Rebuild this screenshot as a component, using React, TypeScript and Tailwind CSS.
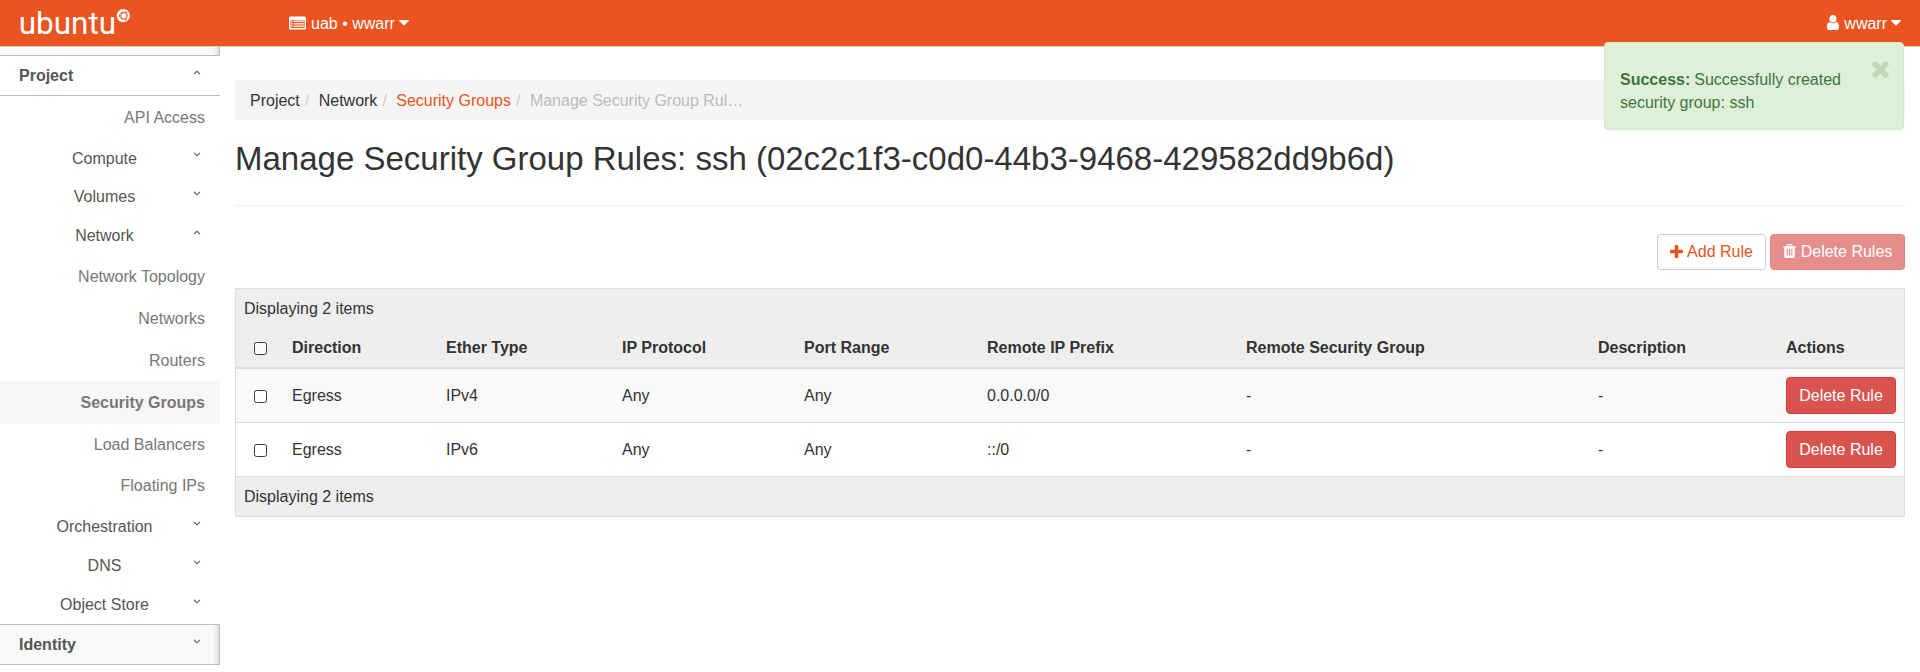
import React from "react";

const leaf = "flex items-center justify-end pr-[15px] text-[#777777]";

type NavItem = { label: string; kind: "leaf" | "group"; open?: boolean; active?: boolean; size: string };

const nav: NavItem[] = [
  { label: "API Access", kind: "leaf", size: "h-[43px] pb-px" },
  { label: "Compute", kind: "group", size: "h-[38px]" },
  { label: "Volumes", kind: "group", size: "h-[39px]" },
  { label: "Network", kind: "group", open: true, size: "h-[39px]" },
  { label: "Network Topology", kind: "leaf", size: "h-[42px]" },
  { label: "Networks", kind: "leaf", size: "h-[42px]" },
  { label: "Routers", kind: "leaf", size: "h-[42px]" },
  { label: "Security Groups", kind: "leaf", active: true, size: "h-[43px] pb-px" },
  { label: "Load Balancers", kind: "leaf", size: "h-[41px]" },
  { label: "Floating IPs", kind: "leaf", size: "h-[42px] pb-[2px]" },
  { label: "Orchestration", kind: "group", size: "h-[39px]" },
  { label: "DNS", kind: "group", size: "h-[39px]" },
  { label: "Object Store", kind: "group", size: "h-[39px]" },
];

const rules = [
  ["Egress", "IPv4", "Any", "Any", "0.0.0.0/0", "-", "-"],
  ["Egress", "IPv6", "Any", "Any", "::/0", "-", "-"],
];

const headings = ["Direction", "Ether Type", "IP Protocol", "Port Range", "Remote IP Prefix", "Remote Security Group", "Description", "Actions"];

const columns = "grid grid-cols-[48px_154px_176px_182px_183px_259px_352px_188px_126px]";

function Chevron({ open }: { open?: boolean }) {
  return (
    <svg className="mb-[7px] h-[5px] w-[8px] shrink-0" viewBox="0 0 8 5" fill="none" stroke="#555" strokeWidth="1.1">
      <path d={open ? "M1 4.2 4 1.2 7 4.2" : "M1 0.8 4 3.8 7 0.8"} />
    </svg>
  );
}

function Caret() {
  return (
    <svg className="h-[6px] w-[10px]" viewBox="0 0 10 6" fill="#fff">
      <path d="M0.6 0h8.8Q10.3 0.3 9.7 1L5.5 5.2Q5 5.6 4.5 5.2L0.3 1Q-0.3 0.3 0.6 0z" />
    </svg>
  );
}

function Checkbox() {
  return (
    <span className="mt-[2px] ml-[18px] block size-[13px] rounded-[2.5px] border border-[#3c3c44] bg-white/60" />
  );
}

function Logo() {
  return (
    <svg className="h-[46px] w-[135px]" viewBox="0 0 135 46" fill="#fff">
      <text x="18.7" y="33.5" fontFamily="Roboto, sans-serif" fontSize="31.5" textLength="97.5" lengthAdjust="spacingAndGlyphs">
        ubuntu
      </text>
      <circle cx="123.3" cy="15.7" r="6.6" />
      <circle cx="123.8" cy="15.7" r="3.2" fill="none" stroke="#e95420" strokeWidth="1.3" />
      <circle cx="119.9" cy="15.7" r="1.5" fill="#e95420" stroke="#fff" strokeWidth="0.6" />
      <circle cx="125.7" cy="12.4" r="1.5" fill="#e95420" stroke="#fff" strokeWidth="0.6" />
      <circle cx="125.7" cy="19" r="1.5" fill="#e95420" stroke="#fff" strokeWidth="0.6" />
    </svg>
  );
}

function RuleButton() {
  return (
    <button className="block h-[37px] w-[110px] rounded-[4px] border border-[#d43f3a] bg-[#d9534f] pb-px text-white">Delete Rule</button>
  );
}

export default function App() {
  return (
    <div className="relative h-[672px] w-[1920px] overflow-hidden bg-white font-['Liberation_Sans',Arial,sans-serif] text-[16px] leading-[23px] text-[#333333]">
      <header className="flex h-[47px] items-center border-b border-[#cccccc] bg-[#e95420] text-white">
        <Logo />
        <div className="ml-[154px] flex flex-1 items-center">
          <svg className="h-[14px] w-[17px]" viewBox="0 0 17 14">
            <rect width="17" height="13" y="0.5" rx="1.5" fill="#fff" />
            <path d="M1.5 4h14v8h-14z" fill="#e95420" />
            <path d="M2 4.5h1.5v1.5h-1.5zM2 7h1.5v1.5h-1.5zM2 9.5h1.5v1.5h-1.5zM4.5 4.5h10.5v1.5H4.5zM4.5 7h10.5v1.5H4.5zM4.5 9.5h10.5v1.5H4.5z" fill="#fff" fillOpacity="0.85" />
          </svg>
          <span className="ml-[5px] mr-[4px]">uab • wwarr</span>
          <Caret />
        </div>
        <div className="flex items-center pr-[19px]">
          <svg className="mb-px h-[15px] w-[12px]" viewBox="0 128 1280 1536" preserveAspectRatio="none" fill="#fff">
            <path d="M1280 1399q0 109-62.5 187t-150.5 78h-854q-88 0-150.5-78t-62.5-187q0-85 8.5-160.5t31.5-152 58.5-131 94-89 134.5-34.5q131 128 313 128t313-128q76 0 134.5 34.5t94 89 58.5 131 31.5 152 8.5 160.5zm-256-887q0 159-112.5 271.5t-271.5 112.5-271.5-112.5-112.5-271.5 112.5-271.5 271.5-112.5 271.5 112.5 112.5 271.5z" />
          </svg>
          <span className="ml-[5px] mr-[4px]">wwarr</span>
          <Caret />
        </div>
      </header>

      <div className="flex">
        <nav className="w-[220px] shrink-0 text-[#555555]">
          <div className="h-[8px] border-r border-[#bbbbbb] bg-linear-to-r from-[#f9f9f9] from-97% to-[#dddddd]" />
          <div className="flex h-[41px] items-center justify-between border-y border-[#bbbbbb] pr-[19px] pl-[19px] font-bold">
            Project
            <Chevron open />
          </div>
          {nav.map((item) =>
            item.kind === "leaf" ? (
              <div key={item.label} className={leaf + " " + item.size + (item.active ? " bg-[#f7f7f7] font-bold" : "")}>
                {item.label}
              </div>
            ) : (
              <div key={item.label} className={"flex items-center pr-[19px] pl-[27px] " + item.size}>
                <span className="w-[155px] shrink-0 text-center">{item.label}</span>
                <span className="flex flex-1 justify-end"><Chevron open={item.open} /></span>
              </div>
            ),
          )}
          <div className="flex h-[41px] items-center justify-between border-y border-r border-[#bbbbbb] bg-linear-to-r from-[#f9f9f9] from-97% to-[#dddddd] pr-[18px] pl-[19px] font-bold">
            Identity
            <Chevron />
          </div>
        </nav>

        <main className="ml-[15px] w-[1670px] pt-[33px]">
          <div className="flex h-[40px] items-center rounded-[4px] bg-[#f5f5f5] px-[15px]">
            <span>Project</span>
            <span className="px-[5px] text-[#cccccc]">/&nbsp;</span>
            <span>Network</span>
            <span className="px-[5px] text-[#cccccc]">/&nbsp;</span>
            <span className="text-[#e95420]">Security Groups</span>
            <span className="px-[5px] text-[#cccccc]">/&nbsp;</span>
            <span className="text-[#bbbbbb]">Manage Security Group Rul…</span>
          </div>
          <h1 className="flex h-[86px] border-b border-[#eeeeee] pt-[20px] text-[33px] leading-[38px]">
            Manage Security Group Rules: ssh (02c2c1f3-c0d0-44b3-9468-429582dd9b6d)
          </h1>
          <div className="mt-[28px] flex h-[36px] justify-end gap-[4px]">
            <button className="flex w-[109px] items-center justify-center gap-[4px] rounded-[4px] border border-[#cccccc] pb-[2px] text-[#e95420]">
              <svg className="h-[13px] w-[13px]" viewBox="192 128 1408 1408" fill="currentColor">
                <path d="M1600 736v192q0 40-28 68t-68 28h-416v416q0 40-28 68t-68 28h-192q-40 0-68-28t-28-68v-416h-416q-40 0-68-28t-28-68v-192q0-40 28-68t68-28h416v-416q0-40 28-68t68-28h192q40 0 68 28t28 68v416h416q40 0 68 28t28 68z" />
              </svg>
              Add Rule
            </button>
            <button className="flex w-[135px] items-center justify-center gap-[5px] rounded-[4px] border border-[#d43f3a] bg-[#d9534f] pb-[2px] text-white opacity-65">
              <svg className="h-[14px] w-[13px]" viewBox="192 128 1408 1536" fill="currentColor">
                <path d="M704 1376v-704q0-14-9-23t-23-9h-64q-14 0-23 9t-9 23v704q0 14 9 23t23 9h64q14 0 23-9t9-23zm256 0v-704q0-14-9-23t-23-9h-64q-14 0-23 9t-9 23v704q0 14 9 23t23 9h64q14 0 23-9t9-23zm256 0v-704q0-14-9-23t-23-9h-64q-14 0-23 9t-9 23v704q0 14 9 23t23 9h64q14 0 23-9t9-23zm-544-992h448l-48-117q-7-9-17-11h-317q-10 2-17 11zm928 32v64q0 14-9 23t-23 9h-96v948q0 83-47 143.5t-113 60.5h-832q-66 0-113-58.5t-47-141.5v-952h-96q-14 0-23-9t-9-23v-64q0-14 9-23t23-9h309l70-167q15-37 54-63t79-26h320q40 0 79 26t54 63l70 167h309q14 0 23 9t9 23z" />
              </svg>
              Delete Rules
            </button>
          </div>

          <section className="mt-[18px] border border-[#dddddd]">
            <div className="flex h-[39px] items-center bg-[#eeeeee] px-[8px]">Displaying 2 items</div>
            <div className={columns + " h-[41px] items-center border-b-2 border-[#dddddd] bg-[#eeeeee] font-bold"}>
              <Checkbox />
              {headings.map((h) => (
                <span key={h} className="pl-[8px]">{h}</span>
              ))}
            </div>
            {rules.map((row, i) => (
              <div key={row[1]} className={columns + (i === 0 ? " h-[54px] items-center border-b border-[#dddddd] bg-[#f9f9f9]" : " h-[54px] items-center border-b border-[#dddddd]")}>
                <Checkbox />
                {row.map((cell, j) => (
                  <span key={j} className="pl-[8px]">{cell}</span>
                ))}
                <span className="pl-[8px]"><RuleButton /></span>
              </div>
            ))}
            <div className="flex h-[39px] items-center bg-[#eeeeee] px-[8px]">Displaying 2 items</div>
          </section>
        </main>
      </div>

      <aside className="absolute top-[42px] left-[1604px] flex h-[88px] w-[300px] rounded-[4px] border border-[#d6e9c6] bg-[#dff0d8] pt-[25px] pl-[15px] text-[#3c763d]">
        <div className="w-[250px]">
          <div className="flex gap-[4px]">
            <b>Success:</b>
            <span>Successfully created</span>
          </div>
          <div>security group: ssh</div>
        </div>
        <svg className="-mt-[7px] ml-[2px] size-[17px]" viewBox="302 366 1188 1188" fill="#bfd9bb">
          <path d="M1490 1322q0 40-28 68l-136 136q-28 28-68 28t-68-28l-294-294-294 294q-28 28-68 28t-68-28l-136-136q-28-28-28-68t28-68l294-294-294-294q-28-28-28-68t28-68l136-136q28-28 68-28t68 28l294 294 294-294q28-28 68-28t68 28l136 136q28 28 28 68t-28 68l-294 294 294 294q28 28 28 68z" />
        </svg>
      </aside>
    </div>
  );
}
